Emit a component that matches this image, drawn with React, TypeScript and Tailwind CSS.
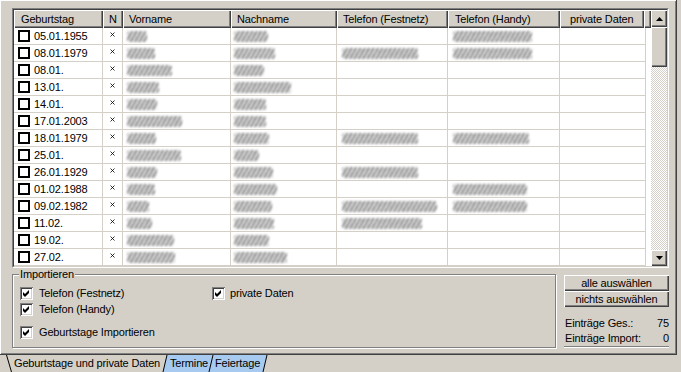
import React from "react";

type Row = { d: string; v: number; n: number; f?: number; h?: number };

const rows: Row[] = [
  { d: "05.01.1955", v: 20, n: 34, h: 79 },
  { d: "08.01.1979", v: 28, n: 41, f: 76, h: 79 },
  { d: "08.01.", v: 45, n: 30 },
  { d: "13.01.", v: 32, n: 57 },
  { d: "14.01.", v: 30, n: 32 },
  { d: "17.01.2003", v: 55, n: 32 },
  { d: "18.01.1979", v: 29, n: 35, f: 76, h: 76 },
  { d: "25.01.", v: 54, n: 25 },
  { d: "26.01.1929", v: 30, n: 39, f: 76 },
  { d: "01.02.1988", v: 28, n: 43, h: 74 },
  { d: "09.02.1982", v: 22, n: 38, f: 95, h: 74 },
  { d: "11.02.", v: 25, n: 40, f: 80 },
  { d: "19.02.", v: 47, n: 35 },
  { d: "27.02.", v: 48, n: 53 },
];

const cols = [89, 20, 108, 106, 111, 112, 84];

function Blob({ w }: { w: number }) {
  return (
    <div
      className="h-[11px] rounded-[3px] blur-[0.8px] bg-[repeating-linear-gradient(120deg,#7c7c7c_0px,#8a8a8a_1.6px,#e6e6e6_2.1px,#ececec_3.8px)]"
      style={{ width: w }}
    />
  );
}

function Raised({
  className,
  children,
  width,
}: {
  className?: string;
  children?: React.ReactNode;
  width?: number;
}) {
  return (
    <div
      className={
        "shrink-0 bg-[#d4d0c8] shadow-[inset_1px_1px_0_#fff,inset_-1px_-1px_0_#404040,inset_-2px_-2px_0_#808080] " +
        (className || "")
      }
      style={width ? { width } : undefined}
    >
      {children}
    </div>
  );
}

function Cross() {
  return (
    <svg width="5" height="5" viewBox="0 0 5 5" className="mb-[3px]">
      <path d="M0.5 0.5 L4.5 4.5 M4.5 0.5 L0.5 4.5" stroke="#000" strokeWidth="0.8" />
    </svg>
  );
}

function Check3D() {
  return (
    <div className="w-[13px] h-[13px] shrink-0 bg-white flex items-center justify-center shadow-[inset_1px_1px_0_#808080,inset_-1px_-1px_0_#fff,inset_2px_2px_0_#404040,inset_-2px_-2px_0_#d4d0c8]">
      <svg width="7" height="7" viewBox="0 0 7 7">
        <path d="M0 2 L2 4 L6 0 L6 3 L2 7 L0 5 Z" fill="#000" />
      </svg>
    </div>
  );
}

function Arrow({ up }: { up?: boolean }) {
  return (
    <svg width="7" height="4" viewBox="0 0 7 4">
      {up ? <path d="M3.5 0 L7 4 L0 4 Z" fill="#000" /> : <path d="M0 0 L7 0 L3.5 4 Z" fill="#000" />}
    </svg>
  );
}

export default function App() {
  const headers = ["Geburtstag", "N", "Vorname", "Nachname", "Telefon (Festnetz)", "Telefon (Handy)", "private Daten"];
  const hpad = [
    "pl-[7px]",
    "justify-center",
    "pl-[6px]",
    "pl-[6px]",
    "pl-[6px]",
    "pl-[7px]",
    "pl-[10px]",
  ];
  return (
    <div className="w-[681px] h-[372px] bg-[#d4d0c8] overflow-hidden font-['Liberation_Sans',Arial,sans-serif] text-[11px] tracking-[-0.15px] text-black leading-[13px] flex flex-col">
      {/* page */}
      <div className="w-[677px] h-[355px] shrink-0 border-r border-b border-[#404040] shadow-[inset_1px_1px_0_#fff,inset_-1px_-1px_0_#808080] pl-[12px] pt-[8px] flex flex-col">
        {/* grid frame */}
        <div className="w-[657px] h-[260px] border border-t-[#808080] border-l-[#808080] border-r-white border-b-white">
          <div className="w-full h-full border border-t-[#404040] border-l-[#404040] border-r-[#d4d0c8] border-b-[#d4d0c8] flex bg-white">
            <div className="w-[637px] flex flex-col">
              {/* header */}
              <div className="flex h-[18px]">
                {headers.map((h, i) => (
                  <Raised key={h} width={cols[i]} className={"h-[18px] flex items-center whitespace-nowrap " + hpad[i]}>
                    {h}
                  </Raised>
                ))}
                <Raised className="h-[18px]" width={7} />
              </div>
              {/* rows */}
              {rows.map((r) => (
                <div key={r.d + r.v} className="flex h-[17px]">
                  <div className="w-[89px] h-[17px] border-r border-b border-[#d4d0c8] flex items-center pl-[4px] gap-[4px]">
                    <div className="w-[12px] h-[12px] border-2 border-black bg-white" />
                    <span>{r.d}</span>
                  </div>
                  <div className="w-[20px] h-[17px] border-r border-b border-[#d4d0c8] flex items-center justify-center">
                    <Cross />
                  </div>
                  <div className="w-[108px] h-[17px] border-r border-b border-[#d4d0c8] flex items-center pl-[4px]">
                    <Blob w={r.v} />
                  </div>
                  <div className="w-[106px] h-[17px] border-r border-b border-[#d4d0c8] flex items-center pl-[3px]">
                    <Blob w={r.n} />
                  </div>
                  <div className="w-[111px] h-[17px] border-r border-b border-[#d4d0c8] flex items-center pl-[5px]">
                    {r.f ? <Blob w={r.f} /> : null}
                  </div>
                  <div className="w-[112px] h-[17px] border-r border-b border-[#d4d0c8] flex items-center pl-[5px]">
                    {r.h ? <Blob w={r.h} /> : null}
                  </div>
                  <div className="w-[86px] h-[17px] border-r border-b border-[#d4d0c8]" />
                </div>
              ))}
            </div>
            {/* scrollbar */}
            <div className="w-[16px] flex flex-col">
              <Raised className="h-[17px] flex items-center justify-center">
                <Arrow up />
              </Raised>
              <Raised className="h-[40px]" />
              <div className="flex-1 bg-[repeating-conic-gradient(#ffffff_0_25%,#d4d0c8_0_50%)] bg-[length:2px_2px]" />
              <Raised className="h-[16px] flex items-center justify-center">
                <Arrow />
              </Raised>
            </div>
          </div>
        </div>
        {/* bottom area */}
        <div className="flex">
          <div className="relative mt-[6px] w-[544px] h-[74px] border border-[#808080] shadow-[inset_1px_1px_0_#fff,1px_1px_0_#fff] flex flex-col pl-[7px] pt-[12px]">
            <span className="absolute left-[6px] top-[-7px] px-[1px] bg-[#d4d0c8]">Importieren</span>
            <div className="flex h-[13px] items-center">
              <div className="w-[192px] flex items-center gap-[6px]">
                <Check3D />
                <span>Telefon (Festnetz)</span>
              </div>
              <div className="flex items-center gap-[5px]">
                <Check3D />
                <span>private Daten</span>
              </div>
            </div>
            <div className="flex h-[13px] items-center gap-[6px] mt-[3px]">
              <Check3D />
              <span>Telefon (Handy)</span>
            </div>
            <div className="flex h-[13px] items-center gap-[6px] mt-[10px]">
              <Check3D />
              <span>Geburtstage Importieren</span>
            </div>
          </div>
          <div className="ml-[8px] mt-[7px] w-[105px] flex flex-col">
            <Raised className="h-[16px] flex items-center justify-center">alle auswählen</Raised>
            <Raised className="h-[16px] flex items-center justify-center">nichts auswählen</Raised>
            <div className="mt-[8px] h-[16px] flex items-center justify-between pl-[1px]">
              <span>Einträge Ges.:</span>
              <span>75</span>
            </div>
            <div className="h-[16px] flex items-center justify-between pl-[1px] border-b border-[#808080] shadow-[0_1px_0_#fff]">
              <span>Einträge Import:</span>
              <span>0</span>
            </div>
          </div>
        </div>
      </div>
      {/* tabs */}
      <div className="relative h-[17px] flex items-center">
        <svg className="absolute left-0 top-0" width="270" height="17" viewBox="0 0 270 17">
          <polygon points="6,0 167,0 163,17 11,17" fill="#d4d0c8" />
          <line x1="6.5" y1="0" x2="11.5" y2="17" stroke="#000" strokeWidth="1" />
          <polygon points="167,0 213,0 209,17 163,17" fill="#a6caf0" />
          <polygon points="213,0 267,0 263,17 209,17" fill="#a6caf0" />
          <line x1="167" y1="0" x2="163" y2="17" stroke="#000" strokeWidth="1" />
          <line x1="213" y1="0" x2="209" y2="17" stroke="#000" strokeWidth="1" />
          <line x1="267" y1="0" x2="263" y2="17" stroke="#000" strokeWidth="1" />
        </svg>
        <span className="relative w-[163px] pl-[14px] whitespace-nowrap">Geburtstage und private Daten</span>
        <span className="relative w-[47px] pl-[7px]">Termine</span>
        <span className="relative pl-[5px]">Feiertage</span>
      </div>
    </div>
  );
}
